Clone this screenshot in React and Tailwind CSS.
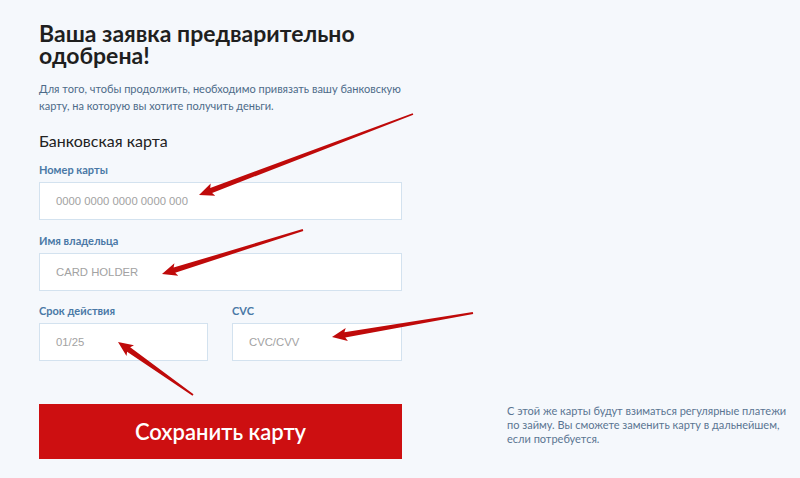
import React from "react";

function arrowPoints(tx, ty, px, py) {
  const dx = px - tx, dy = py - ty;
  const len = Math.hypot(dx, dy);
  const ux = dx / len, uy = dy / len;
  const nx = -uy, ny = ux;
  const L = 13, W = 6.5, w0 = 0.9, w1 = 2.7;
  const bx = px - ux * L, by = py - uy * L;
  const pts = [
    [tx + nx * w0, ty + ny * w0],
    [bx + nx * w1, by + ny * w1],
    [bx - ux * 2 + nx * W, by - uy * 2 + ny * W],
    [px, py],
    [bx - ux * 2 - nx * W, by - uy * 2 - ny * W],
    [bx - nx * w1, by - ny * w1],
    [tx - nx * w0, ty - ny * w0],
  ];
  return pts.map((p) => p.map((v) => v.toFixed(1)).join(",")).join(" ");
}

const arrows = [
  [413, 114, 199, 195],
  [303, 230, 162, 274],
  [473, 313, 332, 337],
  [193, 395, 118, 342],
];

function Field({ label, placeholder, className = "" }) {
  return (
    <div className={"flex flex-col " + className}>
      <div className="h-[14px] text-[11px] leading-[14px] font-bold text-[#4a78a6]">{label}</div>
      <div
        className="mt-[5px] h-[38px] border border-[#d3e2ef] bg-white flex items-center pl-[16px] text-[11.3px] text-[#a2a2a2]"
        style={{ fontFamily: '"Liberation Sans", Arial, sans-serif' }}
      >
        {placeholder}
      </div>
    </div>
  );
}

export default function App() {
  return (
    <div
      className="relative w-[800px] h-[478px] overflow-hidden bg-[#f5f8fc]"
      style={{ fontFamily: 'Lato, "Liberation Sans", sans-serif' }}
    >
      <div className="pl-[39px] pt-[22px] flex flex-col">
        <h1 className="text-[23px] leading-[22px] font-bold text-[#1f1f1f] w-[380px]">
          Ваша заявка предварительно одобрена!
        </h1>
        <p className="mt-[14px] text-[11px] leading-[17px] text-[#4d6b89] w-[370px]">
          Для того, чтобы продолжить, необходимо привязать вашу банковскую карту, на которую вы хотите получить деньги.
        </p>
        <div className="mt-[17px] text-[16px] leading-[20px] text-[#222]">Банковская карта</div>
        <div className="mt-[12px] w-[363px] flex flex-col">
          <Field label="Номер карты" placeholder="0000 0000 0000 0000 000" />
          <Field className="mt-[14px]" label="Имя владельца" placeholder="CARD HOLDER" />
          <div className="mt-[13px] flex gap-[24px]">
            <Field className="w-[169px]" label="Срок действия" placeholder="01/25" />
            <Field className="w-[170px]" label="CVC" placeholder="CVC/CVV" />
          </div>
        </div>
        <div className="mt-[43px] flex">
          <div className="shrink-0 w-[363px] h-[55px] bg-[#cd0f11] flex items-center justify-center text-white text-[22px] font-semibold">
            Сохранить карту
          </div>
          <p className="shrink-0 ml-[105px] w-[290px] text-[11px] leading-[14px] text-[#5a7592]">
            С этой же карты будут взиматься регулярные платежи по займу. Вы сможете заменить карту в дальнейшем, если потребуется.
          </p>
        </div>
      </div>
      <svg className="absolute inset-0 pointer-events-none" width="800" height="478" viewBox="0 0 800 478">
        {arrows.map((a, i) => (
          <polygon key={i} points={arrowPoints(...a)} fill="#bf0a0a" />
        ))}
      </svg>
    </div>
  );
}
